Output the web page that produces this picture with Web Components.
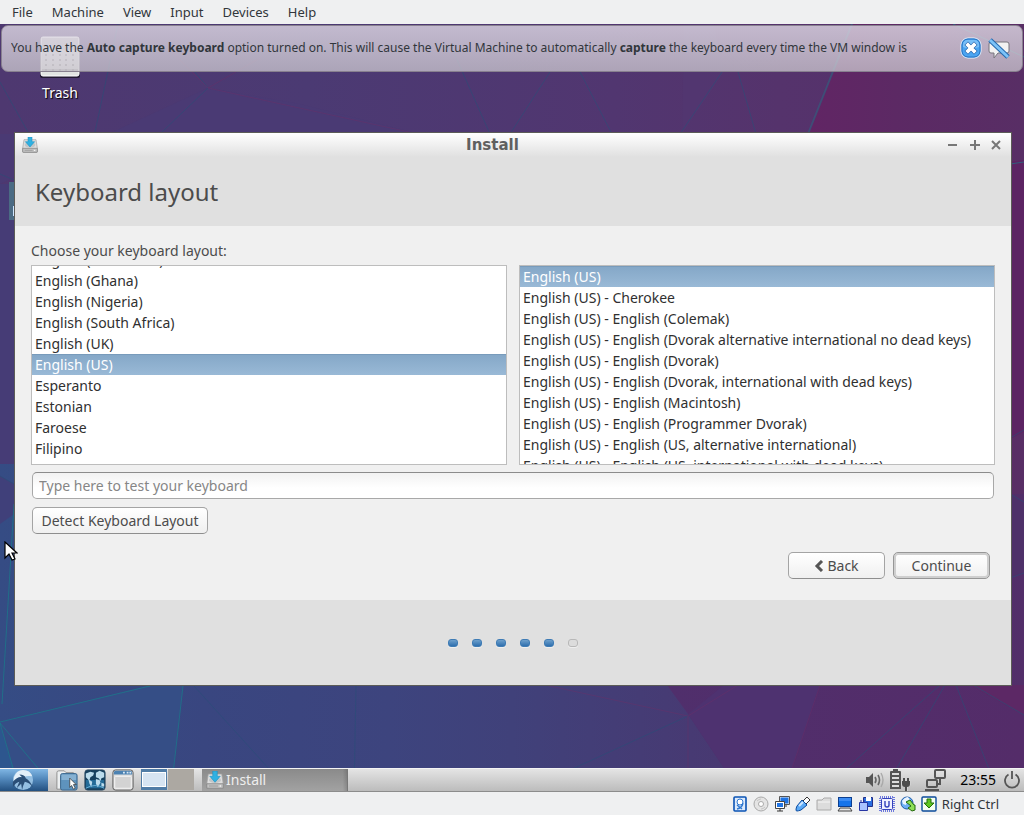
<!DOCTYPE html>
<html lang="en">
<head>
<meta charset="utf-8">
<title>Lubuntu – Install</title>
<style>
html, body { height: 100%; margin: 0; }
body { font: 14px/20px "Noto Sans", "Open Sans", sans-serif; color: #4c4c4c; background: #eff0f1; overflow: hidden; }
</style>
</head>
<body>
<vm-window></vm-window>
<script>
/* Defines a custom element whose shadow root is cloned from a template. */
function define(name, html, setup) {
  const template = document.createElement('template');
  template.innerHTML = html;
  customElements.define(name, class extends HTMLElement {
    constructor() {
      super();
      this.attachShadow({ mode: 'open' }).append(template.content.cloneNode(true));
    }
    connectedCallback() { if (setup) setup.call(this, this.shadowRoot); }
  });
}

/* ---------- icons ---------- */
const DRIVE = `
  <path d="M3 4h18l2 13v5q0 1-1 1H2q-1 0-1-1v-5z" fill="#dedede" stroke="#a2a2a2"/>
  <path d="M1 17h22v5q0 1-1 1H2q-1 0-1-1z" fill="#c2c2c2" stroke="#7c7c7c"/>
  <path d="M4 20h12" stroke="#929292"/><circle cx="19" cy="20" r="1" fill="#fff"/>
  <ellipse cx="12" cy="12" rx="8" ry="4" fill="#c2c6c8"/>
  <path d="M9 0h6v7h4l-7 8-7-8h4z" fill="#2fb1e2" stroke="#1c8fc0" stroke-width=".8"/>`;
const ICONS = {
  install: ['0 0 24 24', DRIVE],
  trash: ['0 0 40 42', `
    <rect x="0" y="1" width="40" height="41" rx="2" fill="#000" opacity=".55"/>
    <rect x="1" y="1" width="38" height="39" rx="2" fill="#e2e4e2" stroke="#fff"/>
    <rect x="2" y="2" width="36" height="12" fill="#c2c2c4"/>
    <g fill="#888">${[19, 24, 29, 34].map(y => [6, 13, 20, 26, 33].map(x => `<circle cx="${x}" cy="${y}" r="1"/>`).join('')).join('')}</g>
    <path d="M2 34h36" stroke="#8c8c8c"/>`],
  dismiss: ['0 0 22 22', `
    <rect x="1" y="1" width="20" height="20" rx="7" fill="#2f86dc" stroke="#eaf5ff"/>
    <rect x="2" y="2" width="18" height="18" rx="6" fill="#4aa5f2" stroke="#2a76c4"/>
    <path d="M3 10q8 3 16 0V8q0-5-5-5H8Q3 3 3 8z" fill="#8ccbfb" opacity=".7"/>
    <path d="M8 8l6 6M14 8l-6 6" stroke="#1f5fa8" stroke-width="5" stroke-linecap="square"/>
    <path d="M8 8l6 6M14 8l-6 6" stroke="#fff" stroke-width="3.800" stroke-linecap="square"/>`],
  mute: ['0 0 22 22', `
    <path d="M3 5h16q2 0 2 2v7q0 2-2 2h-9l-4 5v-5H3q-2 0-2-2V7q0-2 2-2z" fill="#f2f2f2" stroke="#77747c"/>
    <path d="M2 3l18 17" stroke="#2467ad" stroke-width="5"/>
    <path d="M2 3l18 17" stroke="#7cc3f8" stroke-width="3"/>`],
  minimize: ['0 0 12 12', '<path d="M1 6h9" stroke="#777" stroke-width="2"/>'],
  maximize: ['0 0 12 12', '<path d="M1 6h10M6 1v10" stroke="#777" stroke-width="2"/>'],
  close: ['0 0 12 12', '<path d="M1 2l8 8M9 2l-8 8" stroke="#777" stroke-width="2"/>'],
  back: ['0 0 10 12', '<path d="M8 1L3 6l5 5" fill="none" stroke="#555" stroke-width="3"/>'],
  pointer: ['0 0 14 20', '<path d="M1 1v16l4-4 3 6 3-1-3-6h5z" fill="#fff" stroke="#000" stroke-width="1.200"/>'],
  lubuntu: ['0 0 24 24', `
    <circle cx="12" cy="12" r="11" fill="#94bfe2"/>
    <path d="M2 9Q5 1 12 1q8 0 10 7-6-1-9 1Q8 8 2 13z" fill="#e2eff9"/>
    <path d="M1 14q5-6 10-5l-3-3q6 0 7 4 5 3 8 10-4-5-9-6-2 4-3 9l-1-7q-3 3-5 5l3-7q-4 1-7 6z" fill="#2b4f77"/>`],
  files: ['0 0 24 24', `
    <path d="M1 22V4q0-2 2-2h6l2 2h8v18z" fill="#eceff0" stroke="#8a8a8a"/>
    <rect x="5" y="5" width="18" height="18" rx="2" fill="#5e93bd" stroke="#315f88"/>
    <path d="M6 6h16v6H6z" fill="#86b1d2"/>
    <path d="M15 10v10l2-2 2 4 2-1-2-4h3z" fill="#fff" stroke="#333" stroke-width=".8"/>`],
  globe: ['0 0 24 24', `
    <rect x="1" y="1" width="22" height="22" rx="3" fill="#17415f" stroke="#24455e"/>
    <path d="M2 12h20v9H2z" fill="#246b97"/>
    <path d="M2 5l5-2 4 1-1 3-3 2-1 3 3 2-1 6-2-4-1-4-3-3zM13 4l4-2 5 2v5l-3 1-1 3-2-3-3-1zM13 11l4 1 1 3-3 5-2-4zM19 15l3 1v3h-3z" fill="#bcdcec"/>
    <path d="M2 21q10-6 20 0" stroke="#6db3da" fill="none"/>`],
  window: ['0 0 24 24', `
    <rect x="1" y="1" width="22" height="22" rx="3" fill="#dedede" stroke="#555"/>
    <path d="M2 6V4q0-2 2-2h16q2 0 2 2v2z" fill="#4c82b2"/>
    <rect x="3" y="8" width="18" height="13" rx="1" fill="#d3d3d3" stroke="#f5f5f5"/>
    <path d="M12 4h2M16 4h2M19 4h2" stroke="#dceaf6" stroke-width="2"/>`],
  volume: ['0 0 20 20', `
    <path d="M1 7h3l4-4v14l-4-4H1z" fill="#555"/>
    <path d="M10 7q2 3 0 6M13 5q3 5 0 10" fill="none" stroke="#666" stroke-width="1.600"/>
    <path d="M16 3q4 7 0 14" fill="none" stroke="#aaa" stroke-width="1.400"/>`],
  battery: ['0 0 22 22', `
    <path d="M4 0h5v2h2q1 0 1 1v17H1V3q0-1 1-1h2z" fill="#555"/>
    <path d="M3 5h7M3 9h7M3 13h7M3 17h7" stroke="#ddd" stroke-width="2"/>
    <path d="M12 10h10v6q-2 2-3 2v4h-3v-4q-2 0-4-2z" fill="#d2d2d2"/>
    <path d="M13 12h8v3q0 3-3 3v4h-2v-4q-3 0-3-3z" fill="#4c4c4c"/>
    <path d="M15 9v4M19 9v4" stroke="#4c4c4c" stroke-width="2"/>`],
  network: ['0 0 22 22', `
    <g fill="none" stroke="#555" stroke-width="2"><rect x="10" y="1" width="10" height="8" rx="1"/><rect x="2" y="11" width="10" height="7" rx="1"/>
    <path d="M15 9v6h-3M0 21h14"/></g>`],
  power: ['0 0 18 18', '<path d="M5.500 3.500a7 7 0 1 0 7 0M9 0v8" fill="none" stroke="#555" stroke-width="1.800"/>'],
  disk: ['0 0 16 16', `
    <rect x="2" y="1" width="12" height="14" rx="1" fill="#dceafc" stroke="#0a53b4" stroke-width="1.600"/>
    <circle cx="8" cy="6" r="3" fill="#fff" stroke="#2f78d0"/><path d="M5 13q5-1 6-6M5 9l5 4" fill="none" stroke="#2f78d0" stroke-width="1.400"/>`],
  disc: ['0 0 16 16', `
    <circle cx="8" cy="8" r="7" fill="#e4e4e4" stroke="#aaa"/><circle cx="8" cy="8" r="2.500" fill="#fff" stroke="#aaa"/>
    <path d="M4 5q2-2 4-2M12 11q-2 2-4 2" fill="none" stroke="#c6c6c6"/>`],
  lan: ['0 0 16 16', `
    <path d="M6 1h9v7H6z" fill="#1f74e4" stroke="#eee"/><path d="M5.500.5h10v8h-10z" fill="none" stroke="#555"/>
    <path d="M1.500 5.500h9v7h-9z" fill="#fff" stroke="#444"/><path d="M3 7h6v4H3z" fill="#1f74e4"/><path d="M3 15h6M6 13v2M12 9v2" stroke="#333"/>`],
  usb: ['0 0 16 16', `
    <path d="M8 5l4-4 3 3-4 4z" fill="#fff" stroke="#333"/>
    <path d="M2 10l5-6 5 5-6 5q-3 1-4 1t-1-1q0-2 1-4z" fill="#5aa9f6" stroke="#0a4ba0"/><path d="M4 10l4-4" stroke="#cfe6ff" stroke-width="2"/>`],
  shared: ['0 0 16 16', '<path d="M1 14V4h5l2-2h7v12z" fill="#dcdcdc" stroke="#aaa"/><path d="M2 6h12" stroke="#f5f5f5"/>'],
  display: ['0 0 16 16', `
    <rect x="1.500" y="1.500" width="13" height="9" fill="#1674ea" stroke="#0d3f8f"/><path d="M2 2h12v3H2z" fill="#3c8cf4"/>
    <path d="M3 12h10l2 3H1z" fill="#e6e6e6" stroke="#444"/>`],
  record: ['0 0 16 16', `
    <path d="M5.500 1.500h9v9h-9z" fill="#2b6fe0" stroke="#222f86"/><path d="M8 1h5v4H8z" fill="#fff"/>
    <path d="M1.500 6.500h8v8h-8z" fill="#a9c3ff" stroke="#2735a3"/><path d="M3 4v3M6 4v3" stroke="#2735a3"/>`],
  cpu: ['0 0 16 16', `
    <rect x="1" y="1" width="14" height="14" fill="none" stroke="#6c78dc" stroke-width="2" stroke-dasharray="1 1"/>
    <rect x="2.500" y="2.500" width="11" height="11" rx="1" fill="#eef0ff" stroke="#3341bb"/>
    <path d="M6 5v4q0 2 2 2t2-2V5" fill="none" stroke="#3341bb" stroke-width="1.400"/>`],
  mouse: ['0 0 16 16', `
    <circle cx="7" cy="7" r="6" fill="#6db0f5" stroke="#1c5ba8"/><path d="M2 5q3-4 6-4l2 3-3 1-1 4-3-1z" fill="#eaf4ff"/>
    <path d="M6 6l4-2 4 5h1v5l-3 1-4-3 3-2z" fill="#8fe055" stroke="#236a0b"/>`],
  capture: ['0 0 16 16', `
    <rect x="1" y="1" width="14" height="14" rx="1" fill="#f6fff0" stroke="#0b4a9a" stroke-width="1.400"/>
    <path d="M6 3h4v4h3l-5 5-5-5h3z" fill="#5ec61f" stroke="#226e08"/>`],
};
define('ui-icon', `
<style>
:host { display: block; flex: none; width: var(--size, 16px); }
svg { display: block; width: 100%; }
</style>`, function (root) {
  const [box, art] = ICONS[this.getAttribute('name')];
  const holder = document.createElement('template');
  holder.innerHTML = `<svg viewBox="${box}" aria-hidden="true">${art}</svg>`;
  root.append(holder.content);
});

/* ---------- virtual machine chrome ---------- */
define('menu-bar', `
<style>
:host { display: flex; flex: none; height: 24px; align-items: center; gap: 1px; padding: 0 3px; background: #eff0f1; }
button { font: 13px/20px "Noto Sans", sans-serif; color: #31363b; background: none; border: 0; margin: 0; padding: 2px 9px; }
</style>
<button>File</button><button>Machine</button><button>View</button><button>Input</button><button>Devices</button><button>Help</button>`);

define('status-bar', `
<style>
:host { display: flex; flex: none; height: 23px; align-items: center; justify-content: flex-end; gap: 5px; padding-right: 25px;
  background: #eff0f1; color: #31363b; font: 13px/20px "Noto Sans", sans-serif; }
</style>
<ui-icon name="disk"></ui-icon><ui-icon name="disc"></ui-icon><ui-icon name="lan"></ui-icon><ui-icon name="usb"></ui-icon>
<ui-icon name="shared"></ui-icon><ui-icon name="display"></ui-icon><ui-icon name="record"></ui-icon><ui-icon name="cpu"></ui-icon>
<ui-icon name="mouse"></ui-icon><ui-icon name="capture"></ui-icon><span>Right Ctrl</span>`);

define('vm-notice', `
<style>
:host { display: flex; box-sizing: border-box; height: 47px; align-items: center; padding: 0 12px 1px 9px;
  border: 1px solid #88808f; border-radius: 7px; color: #31363b; font: 12px/18px "Noto Sans", sans-serif;
  background: linear-gradient(rgb(224 218 230 / .8), rgb(202 198 206 / .76)); }
p { flex: 1; margin: 0; white-space: nowrap; overflow: hidden; }
button { margin: 0 0 0 6px; padding: 0; border: 0; background: none; --size: 22px; }
</style>
<p><slot></slot></p>
<button aria-label="Close"><ui-icon name="dismiss"></ui-icon></button>
<button aria-label="Do not show again"><ui-icon name="mute"></ui-icon></button>`);

/* ---------- guest desktop ---------- */
define('wall-paper', `
<style>
:host { display: block; }
svg { display: block; width: 100%; height: 100%; }
</style>
<svg viewBox="0 0 1024 768" preserveAspectRatio="none" aria-hidden="true">
  <defs>
    <linearGradient id="top"><stop offset="0" stop-color="#4e3870"/><stop offset=".3" stop-color="#4b3a73"/><stop offset=".6" stop-color="#513670"/><stop offset=".76" stop-color="#55336c"/><stop offset="1" stop-color="#56306a"/></linearGradient>
    <linearGradient id="low"><stop offset="0" stop-color="#354c84"/><stop offset=".2" stop-color="#394680"/><stop offset=".38" stop-color="#3d447e"/><stop offset=".5" stop-color="#40417a"/><stop offset=".7" stop-color="#483972"/><stop offset="1" stop-color="#522e69"/></linearGradient>
    <linearGradient id="rose"><stop offset="0" stop-color="#612564"/><stop offset=".5" stop-color="#5b2a64"/><stop offset="1" stop-color="#582e65"/></linearGradient>
    <linearGradient id="plum"><stop offset="0" stop-color="#502f6c"/><stop offset="1" stop-color="#542c69"/></linearGradient>
  </defs>
  <rect width="1024" height="400" fill="url(#top)"/>
  <rect y="400" width="1024" height="368" fill="url(#low)"/>
  <path d="M0 160L208 64 300 80 420 110H0z" fill="#4a3a74"/>
  <path d="M0 160h20v280H0z" fill="#463c76"/>
  <path d="M0 452l14 8v30L0 500z" fill="#40407a"/>
  <path d="M0 698L150 661h33l-12 107H0z" fill="#354e86"/>
  <path d="M0 700l20 68H0z" fill="#2d568e"/>
  <path d="M684 0h30l10 48-42 62z" fill="#523872" opacity=".5"/>
  <path d="M853 0h171v470h-30L808 110z" fill="url(#rose)"/>
  <path d="M1008 138l16-2v272l-16 8z" fill="#5c2463"/>
  <path d="M1008 470l16 8v70l-16 6z" fill="#4e3169"/>
  <path d="M667 661h357v107H740L688 690z" fill="url(#plum)"/>
  <path d="M820 661l-36 107h-44l-52-78 36-29z" fill="#4e3270"/>
  <path d="M970 661h54v30z" fill="#5c2865"/>
  <g fill="none" stroke="#14868c" stroke-width="1" opacity=".6">
    <path d="M0 698L150 662M0 699l58 69M0 699l20 69M2 680L14 480M183 662l-12 106"/>
    <path d="M953 0l71 33M1010 140l14-2"/>
  </g>
  <path d="M852 0L808 110" stroke="#2f6280" stroke-width="2" opacity=".6"/>
  <g fill="none" stroke="#2a4f78" stroke-width="1" opacity=".6">
    <path d="M0 58l28 50M0 150l14 6M118 0L95 108M194 662l96 106M356 662l-2 106M208 64l-46 44M208 64L195 48"/>
    <path d="M450 20l40 90M550 48l-40 62M580 48l32 62M722 48l-42 62M738 48l18 62M0 452l14 8"/>
    <path d="M940 661l-120 107M945 661l-62 107M956 661l42 107M973 661l51 30M522 768l166-76M1010 414l14-8M1010 470l14 8M1010 554l14-5"/>
  </g>
  <g fill="none" stroke="#702c66" stroke-width="1" opacity=".4">
    <path d="M208 64L160 16M208 64l52-30M208 64l210 46M688 692L545 661M688 692l50-31M688 692v76M820 661l-36 107"/>
  </g>
</svg>`);

define('desktop-icon', `
<style>
:host { display: flex; flex-direction: column; align-items: center; gap: 5px; color: #fff; text-shadow: 1px 1px 1px #000; --size: 40px; }
</style>
<ui-icon name="trash"></ui-icon><span><slot></slot></span>`);

define('task-bar', `
<style>
:host { display: flex; box-sizing: border-box; height: 24px; align-items: stretch; border-top: 1px solid #f4f4f4;
  border-bottom: 1px solid #8c8c8c; background: linear-gradient(#e4e4e4, #bcbcbc); }
button { margin: 0; padding: 0; border: 0; background: none; font: inherit; --size: 22px; }
.start { width: 48px; padding-left: 12px; background: linear-gradient(#7fb6e4, #5288bb 45%, #235080); }
.launch { display: flex; gap: 6px; padding: 0 7px 0 8px; }
.pager { display: flex; gap: 1px; padding: 0 8px 1px 0; }
.pager button { width: 26px; background: #aca8a2; }
.pager .current { background: #d6e4f2; border: solid #507ca6; border-width: 3px 1px; box-shadow: inset 0 0 0 1px #fff; }
.task { display: flex; flex: 0 1 146px; align-items: center; gap: 2px; padding-left: 4px; color: #eee; text-align: left;
  background: linear-gradient(90deg, #0000 97%, #0002), linear-gradient(#8a8a8a, #a2a2a2); border-right: 1px solid #777; --size: 18px; }
.tray { display: flex; flex: 1; align-items: center; justify-content: flex-end; padding-right: 3px; color: #000; }
.tray ui-icon { --size: 20px; }
.tray .battery { --size: 22px; margin: 0 14px 0 4px; }
.tray .net { --size: 22px; margin-right: 13px; }
.tray .power { --size: 18px; margin-left: 7px; }
</style>
<button class="start" aria-label="Applications"><ui-icon name="lubuntu"></ui-icon></button>
<div class="launch">
  <button aria-label="Files"><ui-icon name="files"></ui-icon></button>
  <button aria-label="Web browser"><ui-icon name="globe"></ui-icon></button>
  <button aria-label="Show desktop"><ui-icon name="window"></ui-icon></button>
</div>
<div class="pager"><button class="current" aria-label="Desktop 1"></button><button aria-label="Desktop 2"></button></div>
<button class="task"><ui-icon name="install"></ui-icon><span>Install</span></button>
<div class="tray">
  <ui-icon name="volume"></ui-icon><ui-icon class="battery" name="battery"></ui-icon><ui-icon class="net" name="network"></ui-icon>
  <time>23:55</time><ui-icon class="power" name="power"></ui-icon>
</div>`);

/* ---------- installer ---------- */
define('push-button', `
<style>
:host { display: block; }
button { display: flex; box-sizing: border-box; width: 100%; height: 27px; align-items: center; justify-content: center; gap: 3px;
  margin: 0; padding: 0 5px; border: 1px solid #a4a4a4; border-bottom-color: #8e8e8e; border-radius: 5px;
  background: linear-gradient(#fff, #f0f0f0); font: inherit; color: #4c4c4c; }
:host([default]) button { border-color: #979797; box-shadow: inset 0 0 0 2px #cfcfcf; }
</style>
<button><slot></slot></button>`);

define('text-field', `
<style>
:host { display: block; }
input { display: block; box-sizing: border-box; width: 100%; height: 27px; margin: 0; padding: 0 6px; font: inherit; color: #3c3c3c;
  border: 1px solid #a8a8a8; border-top-color: #8c8c8c; border-radius: 5px; background: linear-gradient(#f2f2f2, #fff 60%); }
input::placeholder { color: #868686; opacity: 1; }
</style>
<input type="text">`, function (root) {
  const input = root.querySelector('input');
  input.placeholder = this.getAttribute('placeholder');
  input.setAttribute('aria-label', this.getAttribute('placeholder'));
});

define('list-option', `
<style>
:host { display: block; height: 21px; padding: 0 3px; line-height: 21px; white-space: nowrap; color: #303030; }
:host([aria-selected="true"]) { color: #fff; background: linear-gradient(#84a7c7, #99b9d6); box-shadow: inset 0 1px #789bbb; }
</style>
<slot></slot>`);

define('list-box', `
<style>
:host { display: block; box-sizing: border-box; min-width: 0; height: 200px; border: 1px solid #bdbdbd; background: #fff; overflow: hidden; }
</style>
<slot></slot>`, function () {
  this.append(...this.getAttribute('options').split('|').map(text => {
    const option = document.createElement('list-option');
    option.setAttribute('role', 'option');
    option.setAttribute('aria-selected', String(text === this.getAttribute('value')));
    option.textContent = text;
    return option;
  }));
  this.scrollTop = Number(this.getAttribute('offset') || 0);
});

define('step-dots', `
<style>
:host { display: flex; justify-content: center; gap: 14px; }
i { box-sizing: border-box; width: 10px; height: 8px; border-radius: 3px; background: linear-gradient(#6ea0cc, #2f6fae); border: 1px solid #3f7cb5; box-shadow: 0 1px #eee; }
i.todo { background: #dcdcdc; border-color: #b8b8b8; }
</style>`, function (root) {
  const done = Number(this.getAttribute('done')), total = Number(this.getAttribute('total'));
  for (let n = 0; n < total; n++) {
    const dot = document.createElement('i');
    if (n >= done) dot.className = 'todo';
    root.append(dot);
  }
});

define('app-window', `
<style>
:host { display: block; border: 1px solid #5c5c58; background: #f0f0f0; }
header { display: flex; align-items: center; height: 24px; padding: 0 8px 0 7px;
  background: linear-gradient(#fff, #e0e0e0); color: #606060; font: bold 15px/20px "DejaVu Sans", sans-serif; --size: 16px; }
header > span { flex: 1; text-align: center; }
.controls { display: flex; gap: 10px; }
.controls button { margin: 0; padding: 0; border: 0; background: none; --size: 12px; }
</style>
<header>
  <ui-icon name="install"></ui-icon><span><slot name="title"></slot></span>
  <div class="controls">
    <button aria-label="Minimize"><ui-icon name="minimize"></ui-icon></button>
    <button aria-label="Maximize"><ui-icon name="maximize"></ui-icon></button>
    <button aria-label="Close"><ui-icon name="close"></ui-icon></button>
  </div>
</header>
<slot></slot>`);

define('keyboard-page', `
<style>
:host { display: block; }
h1 { margin: 0; padding: 18px 20px; background: #e0e0e0; color: #4c4c4c; font-size: 24px; font-weight: 400; line-height: 33px; }
.body { padding: 14px 16px 21px; }
.prompt { line-height: 22px; margin: 0 0 3px; }
.lists { display: grid; grid-template-columns: 1fr 1fr; gap: 12px; }
.entry { display: flex; flex-direction: column; align-items: flex-start; gap: 8px; padding: 7px 1px 18px; }
text-field { width: 100%; }
.entry push-button { min-width: 176px; }
.actions { display: flex; justify-content: flex-end; gap: 8px; padding-right: 5px; }
.actions push-button { width: 97px; }
footer { padding: 39px 0 38px; background: #e0e0e0; }
.back { --size: 10px; }
</style>
<h1>Keyboard layout</h1>
<div class="body">
  <p class="prompt" id="prompt">Choose your keyboard layout:</p>
  <div class="lists">
    <list-box role="listbox" aria-labelledby="prompt" value="English (US)" offset="17"
      options="English (Cameroon)|English (Ghana)|English (Nigeria)|English (South Africa)|English (UK)|English (US)|Esperanto|Estonian|Faroese|Filipino|Finnish"></list-box>
    <list-box role="listbox" aria-labelledby="prompt" value="English (US)"
      options="English (US)|English (US) - Cherokee|English (US) - English (Colemak)|English (US) - English (Dvorak alternative international no dead keys)|English (US) - English (Dvorak)|English (US) - English (Dvorak, international with dead keys)|English (US) - English (Macintosh)|English (US) - English (Programmer Dvorak)|English (US) - English (US, alternative international)|English (US) - English (US, international with dead keys)"></list-box>
  </div>
  <div class="entry">
    <text-field placeholder="Type here to test your keyboard"></text-field>
    <push-button>Detect Keyboard Layout</push-button>
  </div>
  <div class="actions">
    <push-button><ui-icon class="back" name="back"></ui-icon>Back</push-button>
    <push-button default>Continue</push-button>
  </div>
</div>
<footer><step-dots done="5" total="6"></step-dots></footer>`);

define('guest-screen', `
<style>
:host { display: block; position: relative; flex: 1; min-height: 0; overflow: hidden; background: #4b3a73; }
wall-paper { position: absolute; inset: 0; }
desktop-icon { position: absolute; left: 40px; top: 12px; }
.behind { position: absolute; left: 9px; top: 158px; width: 90px; height: 38px; background: linear-gradient(#cfe6ff, #cfe6ff) 4px 24px / 1px 10px no-repeat #4b6b84; }
app-window { position: absolute; left: 14px; right: 12px; top: 108px; }
vm-notice { position: absolute; left: 1px; right: 1px; top: 1px; }
.pointer { position: absolute; left: 4px; top: 517px; --size: 14px; }
task-bar { position: absolute; left: 0; right: 0; bottom: 0; }
</style>
<wall-paper></wall-paper>
<desktop-icon>Trash</desktop-icon>
<div class="behind"></div>
<app-window><span slot="title">Install</span><keyboard-page></keyboard-page></app-window>
<task-bar></task-bar>
<ui-icon class="pointer" name="pointer"></ui-icon>
<vm-notice>You have the <b>Auto capture keyboard</b> option turned on. This will cause the Virtual Machine to automatically <b>capture</b> the keyboard every time the VM window is</vm-notice>`);

define('vm-window', `
<style>
:host { display: flex; flex-direction: column; height: 100vh; }
</style>
<menu-bar></menu-bar><guest-screen></guest-screen><status-bar></status-bar>`);
</script>
</body>
</html>
